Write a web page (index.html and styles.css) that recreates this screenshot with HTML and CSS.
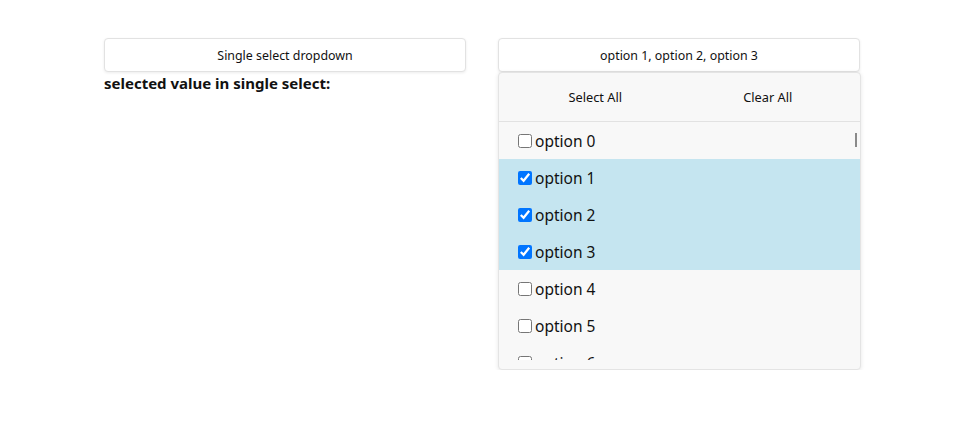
FILE: index.html
```html
<!DOCTYPE html>
<html>
<head>
<meta charset="utf-8">
<link rel="stylesheet" href="styles.css">
</head>
<body>
<div class="page">
  <div class="col left">
    <button class="btn">Single select dropdown</button>
    <div class="label">selected value in single select:</div>
  </div>
  <div class="col right">
    <button class="btn">option 1, option 2, option 3</button>
    <div class="panel">
      <div class="head">
        <button class="hbtn">Select All</button>
        <button class="hbtn">Clear All</button>
      </div>
      <div class="list">
        <label class="opt"><input type="checkbox">option 0</label>
        <label class="opt sel"><input type="checkbox" checked>option 1</label>
        <label class="opt sel"><input type="checkbox" checked>option 2</label>
        <label class="opt sel"><input type="checkbox" checked>option 3</label>
        <label class="opt"><input type="checkbox">option 4</label>
        <label class="opt"><input type="checkbox">option 5</label>
        <label class="opt"><input type="checkbox">option 6</label>
        <div class="thumb"></div>
      </div>
    </div>
  </div>
</div>
</body>
</html>
```
FILE: styles.css
```css
* { box-sizing: border-box; }
body {
  margin: 0;
  font-family: "Noto Sans", "Open Sans", sans-serif;
  color: #111;
  background: #fff;
}
.page {
  display: flex;
  gap: 32px;
  padding: 38px 0 0 104px;
}
.col { display: flex; flex-direction: column; }
.left { width: 362px; }
.right { width: 363px; }
.btn {
  height: 34px;
  width: 362px;
  border: 1px solid #e2e2e2;
  border-radius: 4px;
  background: #fff;
  box-shadow: 0 1px 3px rgba(0,0,0,0.08);
  font-family: inherit;
  font-size: 12.4px;
  color: #111;
  padding: 0;
}
.label {
  margin-top: 2px;
  font-weight: 700;
  font-size: 15px;
  line-height: 18px;
}
.panel {
  width: 363px;
  border: 1px solid #e4e4e4;
  border-radius: 4px;
  background: #f8f8f8;
  box-shadow: 0 1px 4px rgba(0,0,0,0.1);
  padding-bottom: 9px;
}
.head {
  display: flex;
  height: 49px;
  border-bottom: 1px solid #e2e2e2;
  padding: 0 6px 0 10px;
}
.hbtn {
  flex: 1;
  border: 0;
  background: transparent;
  font-family: inherit;
  font-size: 12.8px;
  color: #111;
  padding: 0;
}
.list {
  position: relative;
  height: 238px;
  overflow: hidden;
}
.opt {
  display: flex;
  align-items: center;
  height: 37px;
  padding-left: 15px;
  font-size: 15.5px;
}
.opt input { margin: 0 3px 0 4px; width: 14px; height: 14px; }
.sel { background: #c5e5f0; }
.thumb {
  position: absolute;
  right: 3px;
  top: 11px;
  width: 2px;
  height: 14px;
  background: #8a8a8a;
}
```
